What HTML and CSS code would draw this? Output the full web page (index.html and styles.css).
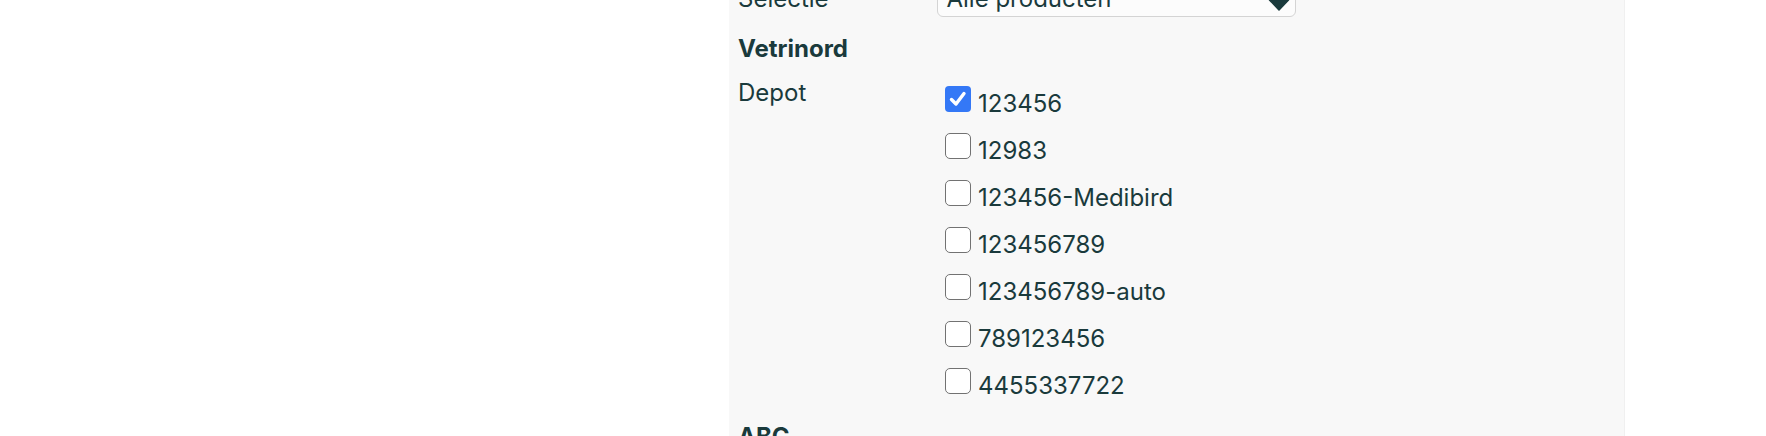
FILE: index.html
```html
<!DOCTYPE html>
<html lang="nl">
<head>
<meta charset="utf-8">
<title>Depot selectie</title>
<link rel="stylesheet" href="styles.css">
</head>
<body>
<div class="layout">
  <aside class="side"></aside>
  <main class="panel">
    <div class="field field-select">
      <div class="field-label">Selectie<span class="req">*</span></div>
      <div class="select">
        <span class="select-value">Alle producten</span>
        <svg class="select-arrow" width="22" height="12" viewBox="0 0 22 12"><path d="M1.5 1 H20.5 L11 11 Z" fill="#1a3a3c" stroke="#1a3a3c" stroke-width="1.5" stroke-linejoin="round"/></svg>
      </div>
    </div>

    <h3 class="group-title">Vetrinord</h3>
    <div class="field field-checks">
      <div class="field-label">Depot</div>
      <div class="checks">
        <label class="check"><span class="box is-checked"><svg width="26" height="26" viewBox="0 0 26 26"><path d="M6.5 13.5 L11 18 L19 7.5" fill="none" stroke="#fff" stroke-width="3.4" stroke-linecap="round" stroke-linejoin="round"/></svg></span><span class="check-text">123456</span></label>
        <label class="check"><span class="box"></span><span class="check-text">12983</span></label>
        <label class="check"><span class="box"></span><span class="check-text">123456-Medibird</span></label>
        <label class="check"><span class="box"></span><span class="check-text">123456789</span></label>
        <label class="check"><span class="box"></span><span class="check-text">123456789-auto</span></label>
        <label class="check"><span class="box"></span><span class="check-text">789123456</span></label>
        <label class="check"><span class="box"></span><span class="check-text">4455337722</span></label>
      </div>
    </div>

    <h3 class="group-title group-next">ABC</h3>
  </main>
</div>
</body>
</html>
```

FILE: styles.css
```css
* {
  box-sizing: border-box;
}

html,
body {
  margin: 0;
  background: #ffffff;
}

body {
  font-family: Inter, "Noto Sans", sans-serif;
  font-size: 24px;
  line-height: 28px;
  color: #1a3a3c;
  overflow: hidden;
}

.layout {
  display: grid;
  grid-template-columns: 729px 896px 1fr;
  min-height: 100vh;
}

.panel {
  background: #f8f8f8;
  border-right: 1px solid #f0f0f0;
  padding: 0 9px;
}

.field {
  display: grid;
  grid-template-columns: 199px 1fr;
  align-items: start;
}

.field-select {
  margin-top: -19px;
  align-items: baseline;
}

.req {
  color: #ef6a5a;
  font-size: 15px;
  line-height: 0;
  vertical-align: 12px;
  margin-left: 5px;
}

.select {
  width: 359px;
  height: 36px;
  display: flex;
  border: 1px solid #d4d4d4;
  border-radius: 6px;
  background: #fcfcfc;
  padding: 3px 5px 3px 8.5px;
}

.select-arrow {
  display: block;
  margin-left: auto;
  align-self: flex-end;
  margin-bottom: 2.5px;
}

.group-title {
  margin: 18px 0 0;
  font-size: 24px;
  line-height: 28px;
  font-weight: 700;
}

.field-checks {
  margin-top: 15.5px;
}

.checks {
  display: flex;
  flex-direction: column;
  gap: 15px;
  padding-top: 7.7px;
}

.check {
  display: block;
}

.box {
  display: inline-block;
  width: 26px;
  height: 26px;
  vertical-align: baseline;
  margin: 0 7px 0 8px;
  border: 1.6px solid #727272;
  border-radius: 5px;
  background: #ffffff;
}

.box svg {
  display: block;
}

.box.is-checked {
  border: 0;
  background: #3478f6;
  border-radius: 4px;
}

.group-next {
  margin-top: 22.4px;
}
```
